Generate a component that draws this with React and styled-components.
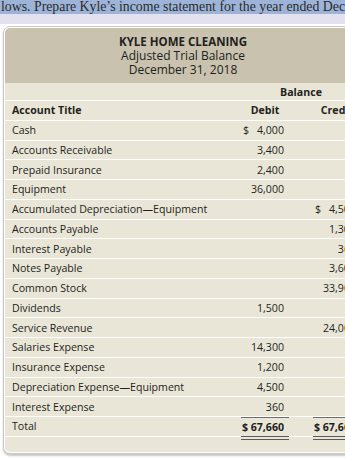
import React from "react";
import styled, { createGlobalStyle } from "styled-components";

const GlobalStyle = createGlobalStyle`
  html, body {
    margin: 0;
    padding: 0;
    background: #fff;
  }
  body {
    width: 345px;
    height: 458px;
    overflow: hidden;
  }
`;

// 계정 데이터
const rows = [
  { title: "Cash", debit: "4,000", debitSign: true },
  { title: "Accounts Receivable", debit: "3,400" },
  { title: "Prepaid Insurance", debit: "2,400" },
  { title: "Equipment", debit: "36,000" },
  { title: "Accumulated Depreciation\u2014Equipment", credit: "4,500", creditSign: true },
  { title: "Accounts Payable", credit: "1,300" },
  { title: "Interest Payable", credit: "360" },
  { title: "Notes Payable", credit: "3,600" },
  { title: "Common Stock", credit: "33,900" },
  { title: "Dividends", debit: "1,500" },
  { title: "Service Revenue", credit: "24,000" },
  { title: "Salaries Expense", debit: "14,300" },
  { title: "Insurance Expense", debit: "1,200" },
  { title: "Depreciation Expense\u2014Equipment", debit: "4,500" },
  { title: "Interest Expense", debit: "360" },
];

const Amount = ({ value, sign }) => {
  if (!value) return <AmountCell />;
  return (
    <AmountCell>
      {sign && <Sign>$</Sign>}
      <span>{value}</span>
    </AmountCell>
  );
};

export default function App() {
  return (
    <Page>
      <GlobalStyle />
      <Banner>lows. Prepare Kyle’s income statement for the year ended December 31, 2018.</Banner>
      <Strip />

      <Card>
        {/* 제목 */}
        <TitleBlock>
          <Company>KYLE HOME CLEANING</Company>
          <Subtitle>Adjusted Trial Balance</Subtitle>
          <Subtitle>December 31, 2018</Subtitle>
        </TitleBlock>

        <Table>
          <BalanceRow>
            <BalanceHead>Balance</BalanceHead>
          </BalanceRow>
          <Row>
            <HeadCell>Account Title</HeadCell>
            <HeadCell center>Debit</HeadCell>
            <HeadCell center>Credit</HeadCell>
          </Row>

          {rows.map((r) => (
            <Row key={r.title}>
              <TitleCell>{r.title}</TitleCell>
              <Amount value={r.debit} sign={r.debitSign} />
              <Amount value={r.credit} sign={r.creditSign} />
            </Row>
          ))}

          {/* 합계 */}
          <Row>
            <TitleCell>Total</TitleCell>
            <TotalCell>$ 67,660</TotalCell>
            <TotalCell>$ 67,660</TotalCell>
          </Row>
          <FootRow>
            <span />
            <DoubleRule />
            <DoubleRule />
          </FootRow>
        </Table>
      </Card>
    </Page>
  );
}

const Page = styled.div`
  width: 345px;
  height: 458px;
  overflow: hidden;
  display: flex;
  flex-direction: column;
`;

const Banner = styled.div`
  height: 14px;
  background: #9db4d8;
  color: #2b2b2b;
  font-family: "Liberation Serif", "Times New Roman", serif;
  font-size: 13.8px;
  line-height: 13px;
  white-space: nowrap;
  overflow: hidden;
  padding-left: 1px;
`;

const Strip = styled.div`
  height: 10px;
  background: #e3e0ef;
`;

const Card = styled.div`
  margin: 2px 0 0 3px;
  width: 356px;
  flex: none;
  padding: 1px;
  background: #fff;
  border: 1px solid #c9c9c9;
  border-radius: 7px;
  box-shadow: 0 2px 2px rgba(0, 0, 0, 0.22);
  overflow: hidden;
  font-family: "Open Sans", "Noto Sans", sans-serif;
  color: #231f20;
`;

const TitleBlock = styled.div`
  background: #c8c2af;
  padding: 6.5px 0;
  text-align: center;
  border-radius: 5px 5px 0 0;
`;

const Company = styled.div`
  font-size: 11.5px;
  font-weight: 700;
  line-height: 14px;
`;

const Subtitle = styled.div`
  font-size: 12px;
  line-height: 14px;
`;

const Table = styled.div`
  background: #e9e6d8;
  font-size: 10.6px;
  border-radius: 0 0 5px 5px;
`;

const Row = styled.div`
  display: grid;
  grid-template-columns: 1fr 48px 48px;
  column-gap: 24px;
  align-items: center;
  height: 19.76px;
  box-sizing: border-box;
  border-bottom: 1px solid #fff;
  white-space: nowrap;
`;

const BalanceRow = styled(Row)`
  height: 18px;
`;

const BalanceHead = styled.div`
  grid-column: 2 / 4;
  text-align: center;
  font-weight: 700;
`;

const HeadCell = styled.div`
  font-weight: 700;
  text-align: ${(p) => (p.center ? "center" : "left")};
  padding-left: ${(p) => (p.center ? "0" : "7px")};
`;

const TitleCell = styled.div`
  padding-left: 7px;
`;

const AmountCell = styled.div`
  display: flex;
  justify-content: flex-end;
  padding: 0 5px 0 2px;
`;

const Sign = styled.span`
  margin-right: auto;
`;

const TotalCell = styled.div`
  align-self: stretch;
  display: flex;
  align-items: center;
  justify-content: flex-end;
  padding-right: 5px;
  border-top: 1px solid #6e6e6e;
  font-weight: 700;
`;

const FootRow = styled.div`
  display: grid;
  grid-template-columns: 1fr 48px 48px;
  column-gap: 24px;
  height: 15px;
`;

const DoubleRule = styled.div`
  margin-top: -1px;
  border-top: 4px double #5a5a5a;
`;
